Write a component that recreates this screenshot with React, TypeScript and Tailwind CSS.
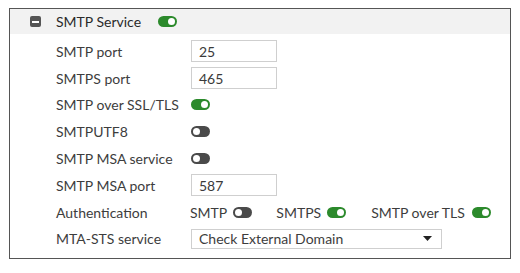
import React from "react";

const Toggle = ({ on }: { on: boolean }) => (
  <span
    className={
      "inline-flex h-[11px] w-[19px] items-center rounded-full px-[2px] " +
      (on ? "justify-end bg-[#2c8a2c]" : "justify-start bg-[#4a4a4a]")
    }
  >
    <span className="h-[7px] w-[7px] rounded-full bg-white" />
  </span>
);

const Field = ({ value }: { value: string }) => (
  <div className="flex h-[22px] w-[86px] items-center border border-[#cfcfcf] bg-white px-[7px] text-[#3a3a3a]">
    {value}
  </div>
);

const Row = ({ label, children }: { label: string; children: React.ReactNode }) => (
  <div className="flex h-[26.8px] items-center">
    <div className="w-[135px] shrink-0">{label}</div>
    <div className="flex items-center">{children}</div>
  </div>
);

export default function App() {
  return (
    <div className="h-[273px] w-[520px] bg-white pl-[9px] pt-[8px] text-[14px] text-[#3d3d3d] [font-family:Lato,'Noto_Sans',sans-serif]">
      <div className="h-[251px] w-[502px] border border-[#555]">
        <div className="flex h-[25px] items-center bg-[#f2f2f2] pl-[20px]">
          <span className="flex h-[11px] w-[11px] items-center justify-center rounded-[2px] bg-[#555]">
            <span className="h-[2px] w-[7px] bg-white" />
          </span>
          <span className="ml-[15px] text-[#2a2a2a]">SMTP Service</span>
          <span className="ml-[17px] flex">
            <Toggle on />
          </span>
        </div>
        <div className="pl-[46px] pt-[4px]">
          <Row label="SMTP port">
            <Field value="25" />
          </Row>
          <Row label="SMTPS port">
            <Field value="465" />
          </Row>
          <Row label="SMTP over SSL/TLS">
            <Toggle on />
          </Row>
          <Row label="SMTPUTF8">
            <Toggle on={false} />
          </Row>
          <Row label="SMTP MSA service">
            <Toggle on={false} />
          </Row>
          <Row label="SMTP MSA port">
            <Field value="587" />
          </Row>
          <Row label="Authentication">
            <span className="-ml-[1px]">SMTP</span>
            <span className="ml-[6px] flex">
              <Toggle on={false} />
            </span>
            <span className="ml-[24px]">SMTPS</span>
            <span className="ml-[6px] flex">
              <Toggle on />
            </span>
            <span className="ml-[25px]">SMTP over TLS</span>
            <span className="ml-[7px] flex">
              <Toggle on />
            </span>
          </Row>
          <Row label="MTA-STS service">
            <div className="flex h-[20px] w-[251px] items-center justify-between border border-[#cfcfcf] bg-white pl-[7px] pr-[9px]">
              <span>Check External Domain</span>
              <svg width="9" height="5" viewBox="0 0 9 5">
                <path d="M0 0h9L4.5 5z" fill="#222" />
              </svg>
            </div>
          </Row>
        </div>
      </div>
    </div>
  );
}
